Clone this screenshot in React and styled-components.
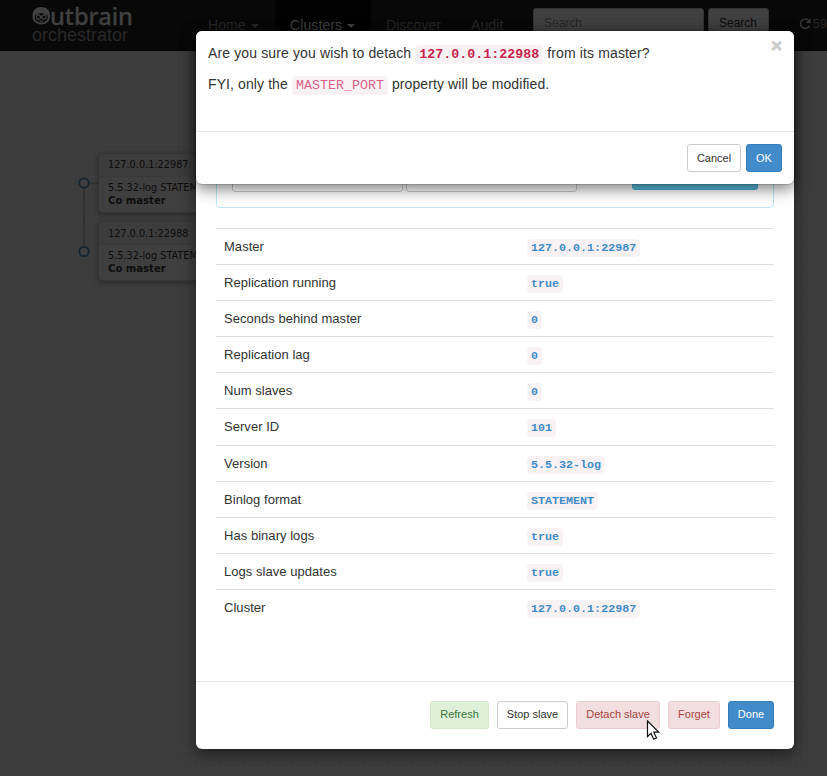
import React from "react";
import styled, { createGlobalStyle, css } from "styled-components";

const Global = createGlobalStyle`
  * { box-sizing: border-box; }
  html, body { margin: 0; height: 776px; overflow: hidden; }
  body { font-family: "Liberation Sans", Arial, sans-serif; font-size: 14px; line-height: 20px; color: #333; background: #3d3d3d; }
`;

const Page = styled.div`
  width: 827px;
  height: 776px;
  position: relative;
  overflow: hidden;
  background-color: #3c3c3c;
  background-image: linear-gradient(to right, #3e3e3e 1px, transparent 1px),
    linear-gradient(to bottom, #3e3e3e 1px, transparent 1px);
  background-size: 6px 6px;
`;

const Navbar = styled.header`
  display: flex;
  height: 51px;
  background: #080808;
  border-bottom: 1px solid #030303;
  white-space: nowrap;
`;

const Brand = styled.div`
  width: 161px;
  padding: 6px 0 0 32px;
  color: #404040;
`;

const LogoRow = styled.div`
  display: flex;
  align-items: center;
  height: 20px;
  svg { flex: none; }
`;

const LogoText = styled.span`
  display: block;
  font: 500 23.7px/20px "Noto Sans", sans-serif;
  margin-left: -1px;
  -webkit-text-stroke: 0.3px #404040;
`;

const Product = styled.div`
  color: #292929;
  font-size: 18px;
  line-height: 18px;
`;

const Nav = styled.nav`
  display: flex;
  margin-left: 32px;
`;

const NavItem = styled.a`
  display: flex;
  align-items: center;
  gap: 5px;
  height: 50px;
  width: ${(p) => p.$w}px;
  padding-left: 15px;
  font-size: 14px;
  letter-spacing: 0.1px;
  color: ${(p) => (p.$active ? "#404040" : "#272727")};
  background: ${(p) => (p.$active ? "#020202" : "transparent")};
`;

const Caret = styled.i`
  border: 4.5px solid transparent;
  border-top-color: currentColor;
  border-bottom: 0;
  margin-top: 2px;
`;

const SearchForm = styled.div`
  display: flex;
  gap: 4px;
  padding-top: 8px;
  margin-left: 14px;
`;

const SearchField = styled.div`
  height: 34px;
  width: ${(p) => p.$w}px;
  padding: 5px 10px;
  border: 1px solid #333;
  border-radius: 3px;
  background: #404040;
  font-size: 12px;
  line-height: 18px;
  color: ${(p) => (p.$button ? "#0d0d0d" : "#262626")};
`;

const Countdown = styled.div`
  display: flex;
  gap: 1px;
  align-items: flex-start;
  padding: 14px 0 0 30px;
  font-size: 12.5px;
  color: #272727;
`;

const Canvas = styled.main`
  position: relative;
  height: 725px;
`;

const Links = styled.svg`
  position: absolute;
  left: 0;
  top: 0;
`;

const Node = styled.article`
  position: absolute;
  left: 98px;
  top: ${(p) => p.$top}px;
  width: 150px;
  height: 60px;
  border: 1px solid #353535;
  border-radius: 4px;
  background: #3f3f3f;
  box-shadow: 0 2px 5px rgba(0, 0, 0, 0.3);
  font: 10.8px/13px "DejaVu Sans Condensed", "DejaVu Sans", sans-serif;
  color: #0d0d0d;
  white-space: nowrap;
  overflow: hidden;
`;

const NodeTitle = styled.div`
  height: 23px;
  padding: ${(p) => p.$inset}px 9px 0;
  border-bottom: 1px solid #383838;
  background: #3c3c3c;
`;

const NodeBody = styled.div`
  padding: 4px 9px;
  b { display: block; font-size: 11.2px; }
`;

const dialog = css`
  position: absolute;
  left: 196px;
  top: 31px;
  width: 598px;
  background: #fff;
  border-radius: 6px;
  display: flex;
  flex-direction: column;
`;

const DetailsDialog = styled.section`
  ${dialog}
  height: 718px;
  box-shadow: 0 5px 15px rgba(0, 0, 0, 0.5);
`;

const ConfirmDialog = styled.section`
  ${dialog}
  height: 153px;
  box-shadow: 0 5px 15px rgba(0, 0, 0, 0.5), 0 0 0 1px rgba(0, 0, 0, 0.12);
`;

const DetailsBody = styled.div`
  flex: 1;
  padding: 20px;
`;

const InfoPanel = styled.div`
  display: flex;
  align-items: flex-end;
  height: 157px;
  margin-bottom: 20px;
  padding: 0 15px 15px;
  border: 1px solid #bce8f1;
  border-radius: 4px;
`;

const PanelInput = styled.div`
  width: 171px;
  height: 30px;
  margin-right: 3px;
  border: 1px solid #ccc;
  border-radius: 3px;
`;

const PanelButton = styled.div`
  width: 126px;
  height: 30px;
  margin: 0 0 2px auto;
  border: 1px solid #46b8da;
  border-radius: 3px;
  background: #5bc0de;
`;

const Row = styled.div`
  display: grid;
  grid-template-columns: 303px 1fr;
  height: 36.1px;
  padding: 8px;
  border-top: 1px solid #ddd;
  font-size: 13px;
  line-height: 20px;
  letter-spacing: 0.04px;
`;

const Code = styled.code`
  display: inline-block;
  padding: 2px 4px;
  border-radius: 4px;
  background: #f9f2f4;
  color: ${(p) => p.$color || "#428bca"};
  font-family: "Liberation Mono", monospace;
  font-weight: ${(p) => (p.$plain ? 400 : 700)};
  font-size: ${(p) => p.$size || 11.7}px;
  line-height: ${(p) => (p.$size ? 15 : 14)}px;
  letter-spacing: 0;
`;

const Value = styled.div`
  display: flex;
  align-items: flex-start;
  padding-top: 2px;
`;

const DetailsFooter = styled.footer`
  display: flex;
  justify-content: flex-end;
  gap: 8px;
  height: 68px;
  padding: 19px 20px;
  border-top: 1px solid #e5e5e5;
`;

const ConfirmFooter = styled(DetailsFooter)`
  gap: 5px;
  height: 53px;
  padding: 12px;
`;

const tones = {
  plain: ["#fff", "#ccc", "#333"],
  primary: ["#428bca", "#357ebd", "#fff"],
  success: ["#dff0d8", "#d6e9c6", "#3c763d"],
  danger: ["#f2dede", "#ebccd1", "#a94442"],
};

const Button = styled.button`
  width: ${(p) => p.$w}px;
  height: 28px;
  padding: 0 0 ${(p) => (p.$raised ? 2 : 0)}px;
  border: 1px solid ${(p) => tones[p.$tone][1]};
  border-radius: 3px;
  background: ${(p) => tones[p.$tone][0]};
  color: ${(p) => tones[p.$tone][2]};
  font: 11px/18px "Liberation Sans", Arial, sans-serif;
  white-space: nowrap;
`;

const ConfirmBody = styled.div`
  position: relative;
  flex: 1;
  padding: 12px;
  font-size: 14px;
`;

const Message = styled.p`
  display: flex;
  align-items: center;
  height: 20px;
  gap: 4px;
  margin: 0 0 11px;
  white-space: nowrap;
  letter-spacing: ${(p) => p.$tracking}px;
  ${Code} { margin-top: 2px; }
`;

const Close = styled.span`
  position: absolute;
  right: 12px;
  top: 5px;
  font-size: 19px;
  font-weight: 700;
  color: #ccc;
  -webkit-text-stroke: 0.7px #ccc;
`;

const Cursor = styled.svg`
  position: absolute;
  left: 646px;
  top: 719px;
`;

const LogoFace = () => (
  <svg width="19" height="20" viewBox="0 0 19 20">
    <path d="M0.500 9.500C0.500 4 4.500 1 9.300 1S18 4 18 9.500v1c0 5-4 8-8.700 8s-8.800-3-8.800-8z" fill="#404040" />
    <path d="M2.800 9.300C5.500 8.800 7.300 7 9.300 7s3.800 1.800 6.500 2.300v1.700c0 3.700-2.800 5.500-6.500 5.500s-6.500-1.800-6.500-5.500z" fill="#0b0b0b" />
    <g fill="none" stroke="#404040" strokeWidth="1.100">
      <circle cx="6.500" cy="11" r="2.100" />
      <circle cx="12.100" cy="11" r="2.100" />
      <path d="M8.600 11h1.400M7.500 14.800q1.800.9 3.600 0" />
    </g>
  </svg>
);

const Refresh = () => (
  <svg width="13" height="20" viewBox="0 0 13 20">
    <path d="M9.800 6.700A4.700 4.700 0 1 0 10.400 11.800" fill="none" stroke="#363636" strokeWidth="1.700" />
    <path d="M11.500 4.200v4.900H6.800z" fill="#363636" />
  </svg>
);

const rows = [
  ["Master", "127.0.0.1:22987"],
  ["Replication running", "true"],
  ["Seconds behind master", "0"],
  ["Replication lag", "0"],
  ["Num slaves", "0"],
  ["Server ID", "101"],
  ["Version", "5.5.32-log"],
  ["Binlog format", "STATEMENT"],
  ["Has binary logs", "true"],
  ["Logs slave updates", "true"],
  ["Cluster", "127.0.0.1:22987"],
];

const nodes = [
  ["127.0.0.1:22987", 102, 4],
  ["127.0.0.1:22988", 170, 5],
];

export default function App() {
  return (
    <Page>
      <Global />
      <Navbar>
        <Brand>
          <LogoRow><LogoFace /><LogoText>utbrain</LogoText></LogoRow>
          <Product>orchestrator</Product>
        </Brand>
        <Nav>
          <NavItem $w={82}>Home <Caret /></NavItem>
          <NavItem $w={96} $active>Clusters <Caret /></NavItem>
          <NavItem $w={85}>Discover</NavItem>
          <NavItem $w={63}>Audit</NavItem>
        </Nav>
        <SearchForm>
          <SearchField $w={171}>Search</SearchField>
          <SearchField $w={61} $button>Search</SearchField>
        </SearchForm>
        <Countdown><Refresh />59</Countdown>
      </Navbar>
      <Canvas>
        <Links width="120" height="230">
          <path d="M84 132V200M84 132H99" stroke="#323232" strokeWidth="2" fill="none" />
          <g fill="#3f3f3f" stroke="#14242f" strokeWidth="1.700">
            <circle cx="84" cy="132" r="4.7" />
            <circle cx="84" cy="200.500" r="4.7" />
          </g>
        </Links>
        {nodes.map(([name, top, inset]) => (
          <Node key={name} $top={top}>
            <NodeTitle $inset={inset}>{name}</NodeTitle>
            <NodeBody>5.5.32-log STATEMENT<b>Co master</b></NodeBody>
          </Node>
        ))}
      </Canvas>
      <DetailsDialog>
        <DetailsBody>
          <InfoPanel><PanelInput /><PanelInput /><PanelButton /></InfoPanel>
          {rows.map(([label, value]) => (
            <Row key={label}>
              <span>{label}</span>
              <Value><Code>{value}</Code></Value>
            </Row>
          ))}
        </DetailsBody>
        <DetailsFooter>
          <Button $raised $w={59} $tone="success">Refresh</Button>
          <Button $raised $w={71} $tone="plain">Stop slave</Button>
          <Button $raised $w={84} $tone="danger">Detach slave</Button>
          <Button $raised $w={52} $tone="danger">Forget</Button>
          <Button $raised $w={46} $tone="primary">Done</Button>
        </DetailsFooter>
      </DetailsDialog>
      <ConfirmDialog>
        <ConfirmBody>
          <Close>×</Close>
          <Message $tracking={0.13}>Are you sure you wish to detach <Code $size={13.333} $color="#c7254e">127.0.0.1:22988</Code> from its master?</Message>
          <Message $tracking={0.1}>FYI, only the <Code $size={13.333} $color="#d9628b" $plain>MASTER_PORT</Code> property will be modified.</Message>
        </ConfirmBody>
        <ConfirmFooter>
          <Button $w={54} $tone="plain">Cancel</Button>
          <Button $w={36} $tone="primary">OK</Button>
        </ConfirmFooter>
      </ConfirmDialog>
      <Cursor width="16" height="24" viewBox="0 0 16 24">
        <path d="M1.500 2v15.500l3.500-3.300 2.700 6 2.800-1.200-2.700-5.800h4.900z" fill="#fff" stroke="#111" strokeWidth="1.2" />
      </Cursor>
    </Page>
  );
}
